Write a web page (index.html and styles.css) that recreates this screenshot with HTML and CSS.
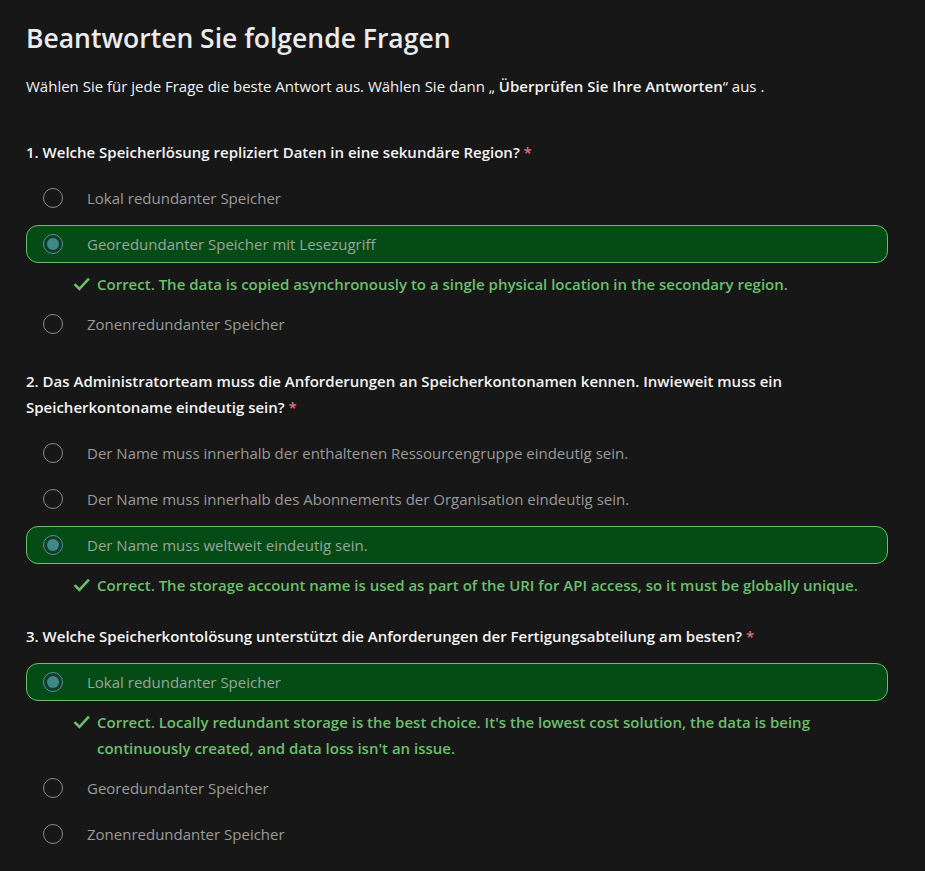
FILE: index.html
```html
<!DOCTYPE html>
<html lang="de">
<head>
<meta charset="utf-8">
<link rel="stylesheet" href="styles.css">
</head>
<body>
<main class="quiz">
  <h1 class="title">Beantworten Sie folgende Fragen</h1>
  <p class="intro">Wählen Sie für jede Frage die beste Antwort aus. Wählen Sie dann „ <strong>Überprüfen Sie Ihre Antworten</strong>“ aus .</p>

  <section class="question">
    <h2 class="q-text">1. Welche Speicherlösung repliziert Daten in eine sekundäre Region? <span class="req">*</span></h2>
    <div class="option"><span class="radio"></span><span class="opt-label">Lokal redundanter Speicher</span></div>
    <div class="option selected"><span class="radio"></span><span class="opt-label">Georedundanter Speicher mit Lesezugriff</span></div>
    <div class="feedback"><svg class="check" viewBox="0 0 16 16"><path d="M1.5 8.5 L6 13 L15 3.5" /></svg><span>Correct. The data is copied asynchronously to a single physical location in the secondary region.</span></div>
    <div class="option"><span class="radio"></span><span class="opt-label">Zonenredundanter Speicher</span></div>
  </section>

  <section class="question">
    <h2 class="q-text">2. Das Administratorteam muss die Anforderungen an Speicherkontonamen kennen. Inwieweit muss ein Speicherkontoname eindeutig sein? <span class="req">*</span></h2>
    <div class="option"><span class="radio"></span><span class="opt-label">Der Name muss innerhalb der enthaltenen Ressourcengruppe eindeutig sein.</span></div>
    <div class="option"><span class="radio"></span><span class="opt-label">Der Name muss innerhalb des Abonnements der Organisation eindeutig sein.</span></div>
    <div class="option selected"><span class="radio"></span><span class="opt-label">Der Name muss weltweit eindeutig sein.</span></div>
    <div class="feedback"><svg class="check" viewBox="0 0 16 16"><path d="M1.5 8.5 L6 13 L15 3.5" /></svg><span>Correct. The storage account name is used as part of the URI for API access, so it must be globally unique.</span></div>
  </section>

  <section class="question">
    <h2 class="q-text">3. Welche Speicherkontolösung unterstützt die Anforderungen der Fertigungsabteilung am besten? <span class="req">*</span></h2>
    <div class="option selected"><span class="radio"></span><span class="opt-label">Lokal redundanter Speicher</span></div>
    <div class="feedback"><svg class="check" viewBox="0 0 16 16"><path d="M1.5 8.5 L6 13 L15 3.5" /></svg><span>Correct. Locally redundant storage is the best choice. It's the lowest cost solution, the data is being continuously created, and data loss isn't an issue.</span></div>
    <div class="option"><span class="radio"></span><span class="opt-label">Georedundanter Speicher</span></div>
    <div class="option"><span class="radio"></span><span class="opt-label">Zonenredundanter Speicher</span></div>
  </section>
</main>
</body>
</html>
```

FILE: styles.css
```css
html, body {
  margin: 0;
  padding: 0;
  background: #171717;
}
body {
  font-family: "Open Sans", "Noto Sans", sans-serif;
  color: #f2f2f2;
}
.quiz {
  padding: 18px 37px 0 26px;
}
.title {
  margin: 0;
  font-size: 26.5px;
  font-weight: 600;
  line-height: 40px;
  color: #ececec;
}
.intro {
  margin: 16px 0 0;
  font-size: 15px;
  line-height: 24px;
  color: #f2f2f2;
}
.intro strong {
  font-weight: 600;
}
.question {
  margin-top: 25px;
}
.intro + .question {
  margin-top: 41px;
}
.q-text {
  margin: 0 0 14px;
  font-size: 15px;
  font-weight: 600;
  line-height: 26px;
  color: #f5f5f5;
}
.req {
  color: #e0747a;
}
.option {
  display: flex;
  align-items: center;
  height: 38px;
  margin-top: 8px;
  padding: 0 16px;
  box-sizing: border-box;
  border: 1px solid transparent;
  border-radius: 12px;
  font-size: 15px;
  color: #9a9a9a;
}
.q-text + .option {
  margin-top: 0;
}
.option.selected {
  background: #054b16;
  border-color: #6abf6a;
  color: #9aa59c;
}
.radio {
  flex: none;
  width: 20px;
  height: 20px;
  box-sizing: border-box;
  border: 1px solid #8a8a8a;
  border-radius: 50%;
  margin-right: 24px;
  display: flex;
  align-items: center;
  justify-content: center;
}
.selected .radio {
  border-color: #4a9a96;
  background: #163a2a;
}
.selected .radio::after {
  content: "";
  width: 12px;
  height: 12px;
  border-radius: 50%;
  background: #3f8a86;
}
.feedback {
  display: flex;
  align-items: flex-start;
  padding: 8px 0 8px 47px;
  font-size: 15px;
  font-weight: 600;
  line-height: 26px;
  color: #6cbf6c;
}
.feedback:last-child {
  padding-bottom: 0;
}
.feedback + .option {
  margin-top: 0;
}
.check {
  flex: none;
  width: 17px;
  height: 17px;
  margin: 4px 7px 0 0;
  fill: none;
  stroke: #6cbf6c;
  stroke-width: 2.4;
}
```
